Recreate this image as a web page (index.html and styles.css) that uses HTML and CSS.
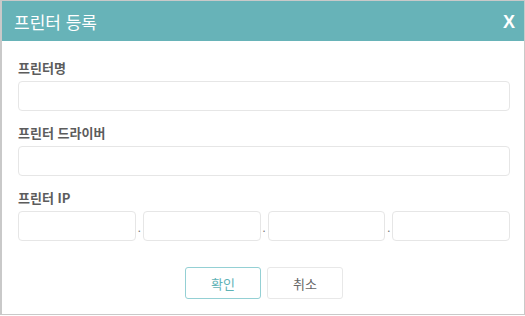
FILE: index.html
```html
<!DOCTYPE html>
<html lang="ko">
<head>
  <meta charset="UTF-8" />
  <meta name="viewport" content="width=device-width, initial-scale=1.0"/>
  <title>프린터 등록</title>
  <link rel="stylesheet" href="styles.css">
</head>
<body>

  <div class="dialog">
    <div class="dialog-header">
      <h1>프린터 등록</h1>
      <span class="close">X</span>
    </div>

    <div class="dialog-body">
      <div class="field">
        <label for="printerName">프린터명</label>
        <input type="text" id="printerName">
      </div>

      <div class="field">
        <label for="printerDriver">프린터 드라이버</label>
        <input type="text" id="printerDriver">
      </div>

      <div class="field">
        <label for="ip1">프린터 IP</label>
        <div class="ip-row">
          <input type="text" id="ip1">
          <span class="dot">.</span>
          <input type="text" id="ip2">
          <span class="dot">.</span>
          <input type="text" id="ip3">
          <span class="dot">.</span>
          <input type="text" id="ip4">
        </div>
      </div>

      <div class="actions">
        <button class="btn btn-ok">확인</button>
        <button class="btn">취소</button>
      </div>
    </div>
  </div>

</body>
</html>
```

FILE: styles.css
```css
:root {
  --teal: #67b3b8;
  --border: #e6e6e6;
  --label: #5c5c5c;
}

body {
  margin: 0;
  font-family: "Noto Sans CJK KR", "Noto Sans", sans-serif;
  background: #fff;
}

.dialog {
  width: 525px;
  height: 315px;
  box-sizing: border-box;
  border: 1px solid #c9c9c9;
  border-left-width: 2px;
  background: #fff;
}

.dialog-header {
  height: 40px;
  background-color: var(--teal);
  display: flex;
  align-items: center;
  justify-content: space-between;
  padding: 0 9px 0 12px;
}

.dialog-header h1 {
  margin: 0;
  font-size: 17px;
  font-weight: 400;
  color: #fff;
}

.close {
  font-family: "Liberation Sans", Arial, sans-serif;
  font-weight: bold;
  font-size: 18px;
  color: #fff;
  margin-top: 2px;
}

.dialog-body {
  padding: 17px 14px 0 16px;
}

.field {
  margin-bottom: 12px;
}

label {
  display: block;
  font-size: 13px;
  font-weight: bold;
  color: var(--label);
  line-height: 20px;
  margin-bottom: 3px;
}

input[type="text"] {
  display: block;
  width: 100%;
  height: 30px;
  box-sizing: border-box;
  border: 1px solid var(--border);
  border-radius: 4px;
  background: #fff;
  outline: none;
}

.ip-row {
  display: flex;
  align-items: flex-end;
}

.ip-row input[type="text"] {
  flex: 1;
  min-width: 0;
}

.dot {
  width: 7px;
  text-align: center;
  font-size: 11px;
  line-height: 11px;
  color: #777;
  margin-bottom: 8px;
}

.actions {
  display: flex;
  justify-content: center;
  gap: 6px;
  margin-top: 26px;
}

.btn {
  width: 76px;
  height: 32px;
  background: #fff;
  border: 1px solid #e8e8e8;
  border-radius: 3px;
  font-family: inherit;
  font-size: 13px;
  color: #666;
  cursor: pointer;
}

.btn-ok {
  border-color: #94d0d4;
  color: #5fb3b6;
}
```
